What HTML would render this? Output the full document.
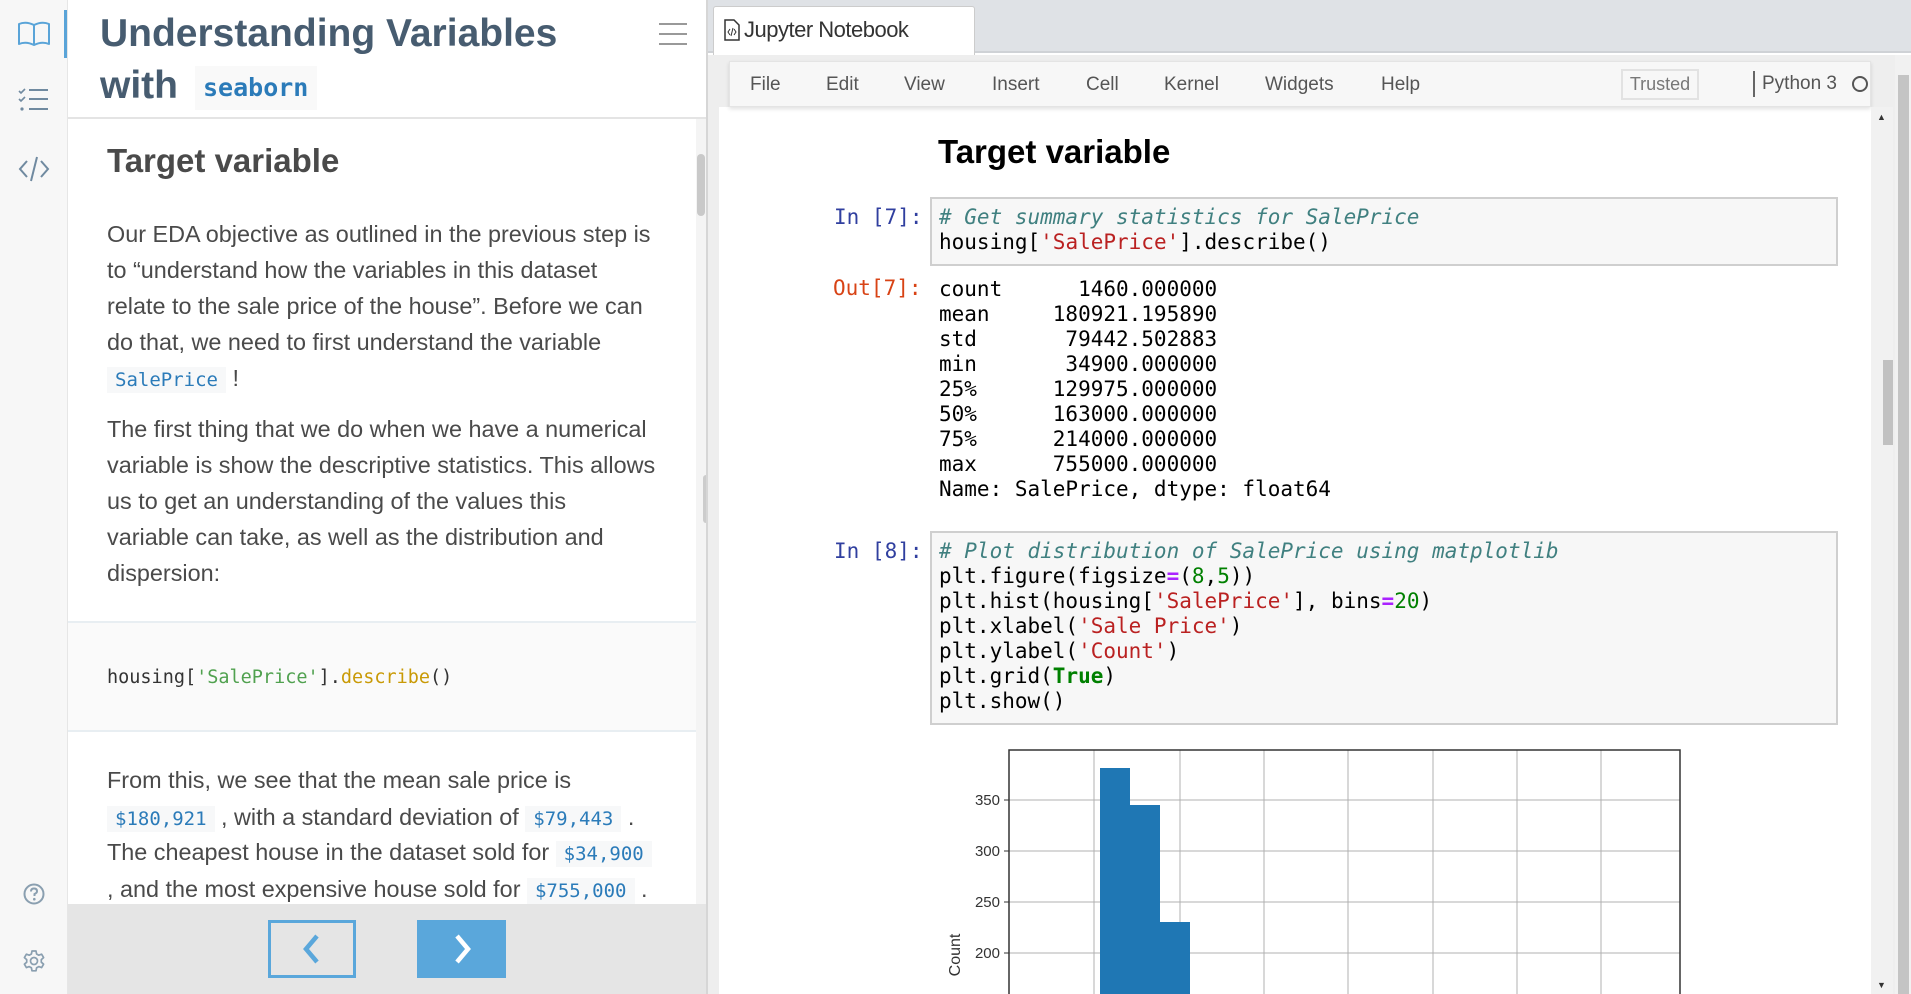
<!DOCTYPE html>
<html><head><meta charset="utf-8">
<style>
*{margin:0;padding:0;box-sizing:border-box}
body{width:1911px;height:994px;overflow:hidden;position:relative;background:#fff;font-family:"Liberation Sans",sans-serif}
.abs{position:absolute}
.rail{left:0;top:0;width:68px;height:994px;background:#f7f7f7;border-right:1px solid #e6e6e6}
.lp{left:68px;top:0;width:639px;height:994px;background:#fff}
.p{position:absolute;left:107px;font-size:23.4px;color:#4a4a4a;white-space:nowrap;line-height:36px}
.ic{font-family:"DejaVu Sans Mono","Liberation Mono",monospace;font-size:19px;color:#2b7bb9;background:#f7f8f9;padding:2px 8px}
.mono{font-family:"DejaVu Sans Mono","Liberation Mono",monospace}
.code{position:absolute;font-family:"DejaVu Sans Mono","Liberation Mono",monospace;font-size:21px;line-height:25px;white-space:pre;color:#000}
.menu{position:absolute;top:74px;font-size:19px;color:#555}
.cm{color:#408080;font-style:italic}
.st{color:#ba2121}
.nm{color:#008000}
.op{color:#aa22ff;font-weight:bold}
.kw{color:#008000;font-weight:bold}
</style></head><body>

<div class="abs rail"></div>
<div class="abs" style="left:64px;top:10px;width:3px;height:48px;background:#5aa4d8"></div>
<svg class="abs" style="left:17px;top:20px" width="34" height="28" viewBox="0 0 34 28"><path d="M2 4 Q9 1 17 5 Q25 1 32 4 V24 Q25 21 17 25 Q9 21 2 24Z M17 5 V25" fill="none" stroke="#5aa4d8" stroke-width="2" stroke-linejoin="round"/></svg>
<svg class="abs" style="left:18px;top:87px" width="32" height="26" viewBox="0 0 32 26"><path d="M1 4 l2 2 l4 -4 M1 12 l2 2 l4 -4" fill="none" stroke="#708aa0" stroke-width="1.6"/><circle cx="4" cy="22" r="1.6" fill="#708aa0"/><path d="M11 3 H30 M11 12 H30 M11 22 H30" stroke="#708aa0" stroke-width="2"/></svg>
<svg class="abs" style="left:18px;top:155px" width="32" height="28" viewBox="0 0 32 28"><path d="M9 6 L2 14 L9 22 M23 6 L30 14 L23 22 M19 2 L13 26" fill="none" stroke="#708aa0" stroke-width="2"/></svg>
<svg class="abs" style="left:22px;top:882px" width="24" height="24" viewBox="0 0 24 24"><circle cx="12" cy="12" r="9.5" fill="none" stroke="#8a9fb0" stroke-width="2"/><path d="M9 9.5 Q9 6.5 12 6.5 Q15 6.5 15 9.3 Q15 11 12.5 12 V14" fill="none" stroke="#8a9fb0" stroke-width="2"/><circle cx="12.3" cy="17.2" r="1.3" fill="#8a9fb0"/></svg>
<svg class="abs" style="left:22px;top:949px" width="24" height="24" viewBox="0 0 24 24"><path d="M10 2 h4 l.6 3 l2.2 1.2 l2.8-1 l2 3.4 l-2.3 2 v2.6 l2.3 2 l-2 3.4 l-2.8-1 l-2.2 1.2 l-.6 3 h-4 l-.6-3 l-2.2-1.2 l-2.8 1 l-2-3.4 l2.3-2 v-2.6 l-2.3-2 l2-3.4 l2.8 1 l2.2-1.2Z" fill="none" stroke="#8a9fb0" stroke-width="1.7" stroke-linejoin="round"/><circle cx="12" cy="12" r="3.5" fill="none" stroke="#8a9fb0" stroke-width="1.7"/></svg>

<div class="abs lp"></div>
<div class="abs" style="left:100px;top:10px;font-size:39px;font-weight:bold;color:#475c70;white-space:nowrap;line-height:48px">Understanding Variables</div>
<div class="abs" style="left:100px;top:62px;font-size:39px;font-weight:bold;color:#475c70;line-height:48px">with</div>
<div class="abs mono" style="left:195px;top:66px;width:122px;height:44px;background:#f9f9f9;color:#2b7bb9;font-size:25px;font-weight:bold;line-height:44px;padding-left:8px">seaborn</div>
<svg class="abs" style="left:659px;top:23px" width="28" height="22"><path d="M0 1 H28 M0 11 H28 M0 21 H28" stroke="#999" stroke-width="2"/></svg>
<div class="abs" style="left:68px;top:117px;width:639px;height:2px;background:#e4e4e4"></div>

<div class="abs" style="left:107px;top:142px;font-size:33px;font-weight:bold;color:#4a4a4a">Target variable</div>
<div class="p" style="top:216px">Our EDA objective as outlined in the previous step is</div>
<div class="p" style="top:252px">to “understand how the variables in this dataset</div>
<div class="p" style="top:288px">relate to the sale price of the house”. Before we can</div>
<div class="p" style="top:324px">do that, we need to first understand the variable</div>
<div class="p" style="top:360px"><span class="ic">SalePrice</span> !</div>
<div class="p" style="top:411px">The first thing that we do when we have a numerical</div>
<div class="p" style="top:447px">variable is show the descriptive statistics. This allows</div>
<div class="p" style="top:483px">us to get an understanding of the values this</div>
<div class="p" style="top:519px">variable can take, as well as the distribution and</div>
<div class="p" style="top:555px">dispersion:</div>

<div class="abs" style="left:68px;top:621px;width:628px;height:111px;background:#fafafa;border-top:2px solid #e8eef2;border-bottom:2px solid #e8eef2"></div>
<div class="abs mono" style="left:107px;top:667px;font-size:18.5px;color:#333;white-space:pre">housing[<span style="color:#50a14f">'SalePrice'</span>].<span style="color:#c99a06">describe</span>()</div>

<div class="p" style="top:762px">From this, we see that the mean sale price is</div>
<div class="p" style="top:799px"><span class="ic">$180,921</span> , with a standard deviation of <span class="ic">$79,443</span> .</div>
<div class="p" style="top:834px">The cheapest house in the dataset sold for <span class="ic">$34,900</span></div>
<div class="p" style="top:871px">, and the most expensive house sold for <span class="ic">$755,000</span> .</div>

<div class="abs" style="left:696px;top:119px;width:10px;height:785px;background:#f4f4f4"></div>
<div class="abs" style="left:697px;top:154px;width:8px;height:62px;background:#c9c9c9;border-radius:4px"></div>
<div class="abs" style="left:703px;top:475px;width:6px;height:48px;background:#ccc;border-radius:3px"></div>

<div class="abs" style="left:68px;top:904px;width:639px;height:90px;background:#e5e5e5"></div>
<div class="abs" style="left:268px;top:920px;width:88px;height:58px;border:3px solid #5aa7db"></div>
<svg class="abs" style="left:300px;top:933px" width="24" height="32"><path d="M17 3 L6 16 L17 29" fill="none" stroke="#5aa7db" stroke-width="4.5"/></svg>
<div class="abs" style="left:417px;top:920px;width:89px;height:58px;background:#5aa7db"></div>
<svg class="abs" style="left:451px;top:933px" width="24" height="32"><path d="M6 3 L17 16 L6 29" fill="none" stroke="#fff" stroke-width="4.5"/></svg>

<div class="abs" style="left:706px;top:0;width:2px;height:994px;background:#d6d6d6"></div>

<div class="abs" style="left:708px;top:0;width:1203px;height:53px;background:#dfe2e6;border-bottom:2px solid #cfd2d6"></div>
<div class="abs" style="left:713px;top:6px;width:262px;height:49px;background:#fff;border:1px solid #ccc;border-bottom:none;border-radius:3px 3px 0 0"></div>
<svg class="abs" style="left:724px;top:19px" width="16" height="22"><path d="M1 1 H10 L15 6 V21 H1Z" fill="none" stroke="#333" stroke-width="1.5"/><path d="M6 10 L4 13 L6 16 M10 10 L12 13 L10 16 M9 9 L7 17" stroke="#333" stroke-width="1" fill="none"/></svg>
<div class="abs" style="left:744px;top:17px;font-size:22px;color:#333;letter-spacing:-0.5px">Jupyter Notebook</div>

<div class="abs" style="left:708px;top:55px;width:1187px;height:939px;background:#eee"></div>
<div class="abs" style="left:719px;top:107px;width:1152px;height:887px;background:#fff"></div>
<div class="abs" style="left:729px;top:61px;width:1142px;height:46px;background:#f7f7f7;border:1px solid #e4e4e4;box-shadow:0 2px 4px rgba(0,0,0,.12)"></div>
<div class="menu" style="left:750px">File</div>
<div class="menu" style="left:826px">Edit</div>
<div class="menu" style="left:904px">View</div>
<div class="menu" style="left:992px">Insert</div>
<div class="menu" style="left:1086px">Cell</div>
<div class="menu" style="left:1164px">Kernel</div>
<div class="menu" style="left:1265px">Widgets</div>
<div class="menu" style="left:1381px">Help</div>
<div class="abs" style="left:1621px;top:69px;width:78px;height:31px;border:2px solid #e2e2e2;font-size:18px;color:#777;text-align:center;line-height:27px">Trusted</div>
<div class="abs" style="left:1753px;top:71px;width:2px;height:26px;background:#666"></div>
<div class="abs" style="left:1762px;top:73px;font-size:19px;color:#555">Python 3</div>
<div class="abs" style="left:1852px;top:76px;width:16px;height:16px;border:2.5px solid #555;border-radius:50%"></div>

<div class="abs" style="left:1871px;top:107px;width:22px;height:887px;background:#f1f1f1"></div>
<div class="abs" style="left:1883px;top:360px;width:10px;height:85px;background:#c1c1c1"></div>
<div class="abs" style="left:1877px;top:112px;font-size:9px;color:#333">▲</div>
<div class="abs" style="left:1877px;top:980px;font-size:9px;color:#333">▼</div>
<div class="abs" style="left:1895px;top:55px;width:16px;height:939px;background:#f1f1f1"></div>
<div class="abs" style="left:1898px;top:75px;width:11px;height:919px;background:#c4c4c4"></div>

<div class="abs" style="left:938px;top:133px;font-size:33px;font-weight:bold;color:#000">Target variable</div>

<div class="code" style="left:834px;top:205px;color:#303f9f">In [7]:</div>
<div class="abs" style="left:930px;top:197px;width:908px;height:69px;background:#f7f7f7;border:2px solid #cfcfcf"></div>
<div class="code" style="left:939px;top:205px"><span class="cm"># Get summary statistics for SalePrice</span>
housing[<span class="st">'SalePrice'</span>].describe()</div>

<div class="code" style="left:833px;top:276px;color:#d84315">Out[7]:</div>
<div class="code" style="left:939px;top:277px">count      1460.000000
mean     180921.195890
std       79442.502883
min       34900.000000
25%      129975.000000
50%      163000.000000
75%      214000.000000
max      755000.000000
Name: SalePrice, dtype: float64</div>

<div class="code" style="left:834px;top:539px;color:#303f9f">In [8]:</div>
<div class="abs" style="left:930px;top:531px;width:908px;height:194px;background:#f7f7f7;border:2px solid #cfcfcf"></div>
<div class="code" style="left:939px;top:539px"><span class="cm"># Plot distribution of SalePrice using matplotlib</span>
plt.figure(figsize<span class="op">=</span>(<span class="nm">8</span>,<span class="nm">5</span>))
plt.hist(housing[<span class="st">'SalePrice'</span>], bins<span class="op">=</span><span class="nm">20</span>)
plt.xlabel(<span class="st">'Sale Price'</span>)
plt.ylabel(<span class="st">'Count'</span>)
plt.grid(<span class="kw">True</span>)
plt.show()</div>

<svg class="abs" style="left:940px;top:740px" width="760" height="254" viewBox="940 740 760 254">
<g stroke="#b0b0b0" stroke-width="1">
<path d="M1094 750V994M1180 750V994M1264 750V994M1348 750V994M1433 750V994M1517 750V994M1601 750V994"/>
<path d="M1009 800H1680M1009 851H1680M1009 902H1680M1009 953H1680"/>
</g>
<rect x="1100" y="768" width="30" height="230" fill="#1f77b4"/>
<rect x="1130" y="805" width="30" height="190" fill="#1f77b4"/>
<rect x="1160" y="922" width="30" height="80" fill="#1f77b4"/>
<path d="M1009 994V750H1680V994" fill="none" stroke="#333" stroke-width="1.5"/>
<path d="M1004 800H1009M1004 851H1009M1004 902H1009M1004 953H1009" stroke="#333"/>
<g font-family="Liberation Sans,sans-serif" font-size="15" fill="#333" text-anchor="end">
<text x="1000" y="805">350</text><text x="1000" y="856">300</text><text x="1000" y="907">250</text><text x="1000" y="958">200</text>
</g>
<text transform="translate(960 955) rotate(-90)" text-anchor="middle" font-family="Liberation Sans,sans-serif" font-size="16" fill="#333">Count</text>
</svg>

</body></html>
